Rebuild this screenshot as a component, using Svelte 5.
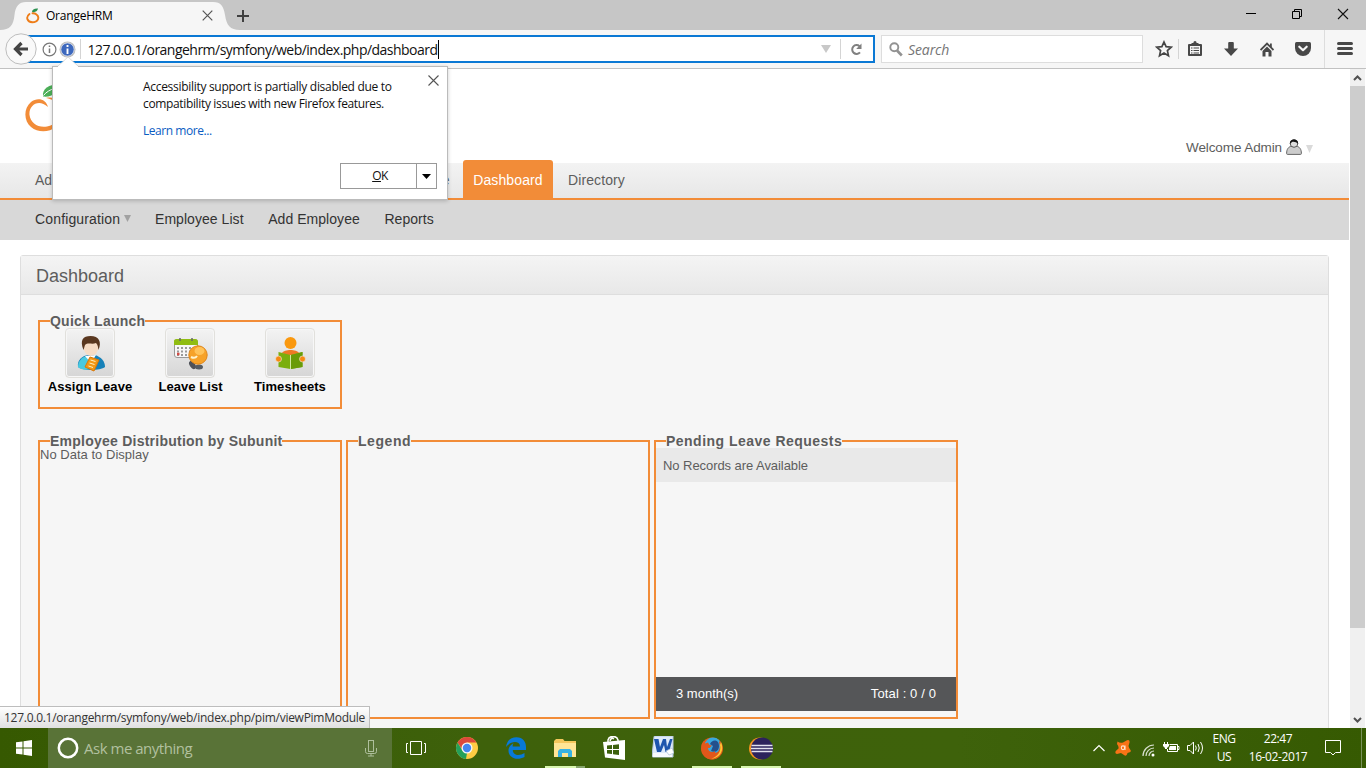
<script>
  const submenu = ['Employee List', 'Add Employee', 'Reports'];
  const launch = [
    { label: 'Assign Leave', icon: 'person' },
    { label: 'Leave List', icon: 'calendar' },
    { label: 'Timesheets', icon: 'book' }
  ];
</script>

<div class="screen">
  <header class="titlebar">
    <svg class="tabshape" width="246" height="30" viewBox="0 0 246 30">
      <path d="M0 30C10 30 13.500 25 14.500 15C15.500 6 19 2 26 2H213C221 2 223.500 6 225 15C226.500 25 230 30 240 30Z" fill="#f6f6f6" />
    </svg>
    <div class="tab">
      <svg width="14" height="16" viewBox="0 0 14 16">
        <path d="M3.500 6C-.5 9 1 14 6.300 14.200C12.500 14.200 13.800 9 10.500 6.500C9.500 5.700 8 5.200 6.500 5.300" fill="none" stroke="#ee7d18" stroke-width="1.900" stroke-linecap="round" />
        <path d="M6 4C6 1.500 8.500.3 12 .6C11.500 3.600 9 4.500 6 4Z" fill="#2b9150" />
      </svg>
      <span>OrangeHRM</span>
      <svg class="x" width="11" height="11" viewBox="0 0 11 11"><path d="M.7.700L10.300 10.300M10.300.700L.7 10.300" stroke="#555" stroke-width="1.200" /></svg>
    </div>
    <svg class="plus" width="12" height="12" viewBox="0 0 12 12"><path d="M6 0V12M0 6H12" stroke="#404040" stroke-width="2" /></svg>
    <div class="winbtns">
      <svg width="46" height="28" viewBox="0 0 46 28"><path d="M18 13.500H28" stroke="#000" /></svg>
      <svg width="46" height="28" viewBox="0 0 46 28"><path d="M18.500 11.500H25.500V18.500H18.500ZM20.500 11V9.500H27.500V16.500H26" fill="none" stroke="#000" /></svg>
      <svg width="46" height="28" viewBox="0 0 46 28"><path d="M18 9L28 19M28 9L18 19" stroke="#111" stroke-width="1.100" /></svg>
    </div>
  </header>

  <nav class="toolbar">
    <svg class="back" width="32" height="32" viewBox="0 0 32 32">
      <circle cx="16" cy="16" r="15.200" fill="#f9f9f9" stroke="#bdbdbd" />
      <path d="M16.500 10L10.500 16L16.500 22M11.500 16H23" fill="none" stroke="#444" stroke-width="3.200" />
    </svg>
    <div class="urlbar">
      <svg width="15" height="15" viewBox="0 0 15 15"><circle cx="7.500" cy="7.500" r="6.400" fill="none" stroke="#777" stroke-width="1.200" /><path d="M7.500 6.500V11M7.500 3.500V5" stroke="#777" stroke-width="1.500" /></svg>
      <svg width="17" height="17" viewBox="0 0 17 17"><circle cx="8.500" cy="8.500" r="8" fill="#bdbdbd" /><circle cx="8.500" cy="8.500" r="6.600" fill="#3d68bd" stroke="#e8ecf5" stroke-width=".7" /><path d="M8.500 7.500V13M8.500 4V6" stroke="#fff" stroke-width="1.900" /></svg>
      <i class="sep"></i>
      <span class="url">127.0.0.1/orangehrm/symfony/web/index.php/dashboard</span><i class="caret"></i>
      <svg class="drop" width="10" height="8" viewBox="0 0 10 8"><path d="M0 0H10L5 8Z" fill="#c8c8c8" /></svg>
      <i class="sep tall"></i>
      <svg class="reload" width="13" height="13" viewBox="0 0 13 13"><path d="M9.500 3.200A4.400 4.400 0 1 0 10 9.300" fill="none" stroke="#808080" stroke-width="2" /><path d="M11.500.5V6H6.200Z" fill="#808080" /></svg>
    </div>
    <div class="search">
      <svg width="14" height="15" viewBox="0 0 14 15"><circle cx="5.300" cy="5.300" r="4" fill="none" stroke="#929292" stroke-width="1.900" /><path d="M8 8.500L12.800 13.500" stroke="#929292" stroke-width="2.600" /></svg>
      <span>Search</span>
    </div>
    <div class="tools">
      <svg width="18" height="18" viewBox="0 0 18 18"><path d="M9 2L11.100 6.700L16.200 7.200L12.400 10.600L13.500 15.700L9 13L4.500 15.700L5.600 10.600L1.800 7.200L6.900 6.700Z" fill="none" stroke="#454545" stroke-width="1.700" /></svg>
      <i class="sep"></i>
      <svg class="clip" width="16" height="16" viewBox="0 0 16 16"><path d="M2 4H14V14H2Z" fill="none" stroke="#484848" stroke-width="2" stroke-linejoin="round" /><path d="M4.500 3.500V2H6.300Q6.500 0 8 0Q9.500 0 9.700 2H11.500V4H4.500Z" fill="#484848" /><path d="M4 7H5.500M6.500 7H12M4 9.500H5.500M6.500 9.500H12M4 12H5.500M6.500 12H12" stroke="#484848" stroke-width="1.200" /></svg>
      <svg width="14" height="14" viewBox="0 0 14 14"><path d="M4.200 1Q4.200 0 5.200 0H8.800Q9.800 0 9.800 1V6.500H14L7 14L0 6.500H4.200Z" fill="#484848" /></svg>
      <svg width="14" height="15" viewBox="0 0 14 15"><path d="M.5 8L7 1.500L13.500 8" fill="none" stroke="#484848" stroke-width="1.900" /><path d="M2.500 9L7 4.500L11.500 9V14.500H8.500V10H5.500V14.500H2.500Z" fill="#484848" /><path d="M10 1.500H11.800V5H10Z" fill="#484848" /></svg>
      <svg width="16" height="14" viewBox="0 0 16 14"><path d="M1.500 0H14.500Q16 0 16 1.500V6A8 8 0 0 1 0 6V1.500Q0 0 1.500 0Z" fill="#484848" /><path d="M4.300 4.700L8 8.200L11.700 4.700" fill="none" stroke="#f6f6f6" stroke-width="2.200" stroke-linecap="round" stroke-linejoin="round" /></svg>
      <i class="divider"></i>
      <svg class="burger" width="16" height="13" viewBox="0 0 16 13"><path d="M1.500 1.500H14.500M1.500 6.500H14.500M1.500 11.500H14.500" stroke="#484848" stroke-width="3" stroke-linecap="round" /></svg>
    </div>
  </nav>

  <div class="viewport">
    <main class="page">
      <div class="brand">
        <svg class="logo" width="52" height="52" viewBox="0 0 52 52">
          <path d="M24 24C22 15.500 13 14 7 19C-1 26 0 38 7 44C14 50 25 49.500 32 44C41 37 42 25 35 18C31 14.500 26 14 22 15C28 16 34 19 36 25C38 33 33 42 23 43.500C14 45 6.500 40 5.500 32C4.500 23 14 15 24 24Z" fill="#f28c38" />
          <path d="M19 13.500C18 6 24 1 37 1C34 10 28 14.500 19 13.500Z" fill="#4caf58" /><path d="M19.500 12.500C22 9 26 7 31 5" fill="none" stroke="#fff" />
        </svg>
        <div class="welcome"><span>Welcome Admin</span>
          <svg width="16" height="17" viewBox="0 0 16 17"><path d="M.6 15.500C.6 11 2.500 8.800 5.500 8.200H10.500C13.500 8.800 15.400 11 15.400 15.500Q15.400 16.400 14.400 16.400H1.600Q.6 16.400.6 15.500Z" fill="#ccc" stroke="#666" /><circle cx="8" cy="5.500" r="3.800" fill="#ddd" stroke="#555" /><path d="M4 6C3 0 13 0 12 6C10.500 4 8 3.500 6 4Z" fill="#151515" /></svg>
          <svg class="tri" width="7" height="8" viewBox="0 0 7 8"><path d="M0 0H7L3.500 8Z" fill="#dadada" /></svg>
        </div>
      </div>
      <div class="menu"><span class="admin">Admin</span><span class="time">Time</span><b>Dashboard</b><span class="directory">Directory</span></div>
      <div class="submenu">
        <i class="notch"></i>
        <span class="config">Configuration<svg width="7" height="7" viewBox="0 0 7 7"><path d="M0 0H7L3.500 7Z" fill="#a1a1a1" /></svg></span>
        {#each submenu as item}<span>{item}</span>{/each}
      </div>
      <section class="box">
        <h1>Dashboard</h1>
        <div class="content">
          <section class="panel quick">
            <h2 class="quicktitle">Quick Launch</h2>
            <div class="launches">
              {#each launch as item}
                <div class="launch">
                  <div class="tile">
                    <svg width="46" height="46" viewBox="0 0 46 46">
                      {#if item.icon === 'person'}
                        <path d="M11 37C10 30 15 26 21 25H28C34 27 38 31 38 37C33 41 16 41 11 37Z" fill="#1681b8" />
                        <path d="M11 37C11 31 15 27 20 26L24 39C19 40 14 40 11 37Z" fill="#49c9df" />
                        <path d="M18 26L24 33L29 25Z" fill="#fff" />
                        <ellipse cx="24" cy="17" rx="7.500" ry="9" fill="#f6dcc5" />
                        <path d="M16.500 20C12.500 10 16 6 23.500 6C32 6 35 12 31.500 20C31 17 31 15 29 13C25 15 21 12 18 15Z" fill="#5a3820" />
                        <path d="M23 27L32 30L27 41L18 37Z" fill="#f39815" stroke="#d87707" /><path d="M23.500 30L28.500 31.500M22.500 33L27.500 34.500M21.500 36L26 37.500" stroke="#fff1c0" />
                      {:else if item.icon === 'calendar'}
                        <rect x="7.500" y="9.500" width="23" height="18" rx="2.500" fill="#f7f7f7" stroke="#999" />
                        <path d="M7 15V11Q7 9 10 9H28Q31 9 31 12V15Z" fill="#90bd12" /><path d="M13 8V11M25 8V11" stroke="#666" stroke-width="1.500" />
                        <path d="M10 18H28M10 21.500H28M10 25H28" stroke="#999" stroke-width="2" stroke-dasharray="2 2" /><path d="M10 24H12.500" stroke="#d34b45" stroke-width="2.500" />
                        <ellipse cx="25.500" cy="35" rx="4.500" ry="2.700" transform="rotate(55 25.500 35)" fill="#4e5158" /><ellipse cx="32" cy="37" rx="4" ry="2.500" fill="#555b62" />
                        <circle cx="31" cy="25" r="9.200" fill="#f6a229" stroke="#df8518" /><ellipse cx="32.500" cy="21" rx="5" ry="4" fill="#ffc35a" /><path d="M24 27Q28 29 30 26" fill="none" stroke="#fff3ce" stroke-width="2" />
                      {:else}
                        <circle cx="23.500" cy="13" r="6" fill="#fa980e" /><path d="M15 23C17 19 30 19 32 23L24 27Z" fill="#ee7924" />
                        <path d="M11.500 22L23.500 25L35.500 22V37L23.500 39L11.500 37Z" fill="#7bae0d" /><path d="M24 25L35.500 22V37L24 39Z" fill="#699b08" /><path d="M23.500 25V39" stroke="#d1e9a2" />
                        <circle cx="11.500" cy="29" r="3" fill="#f78913" stroke="#eee" stroke-width=".6" /><circle cx="35.500" cy="29" r="3" fill="#f78913" stroke="#eee" stroke-width=".6" />
                      {/if}
                    </svg>
                  </div>
                  <strong>{item.label}</strong>
                </div>
              {/each}
            </div>
          </section>
          <div class="panels">
            <section class="panel"><h2 class="dist">Employee Distribution by Subunit</h2><p>No Data to Display</p></section>
            <section class="panel"><h2 class="legend">Legend</h2></section>
            <section class="panel pending"><h2>Pending Leave Requests</h2>
              <div class="empty">No Records are Available</div>
              <footer><span>3 month(s)</span><span class="total">Total : 0 / 0</span></footer>
            </section>
          </div>
        </div>
      </section>
    </main>
    <aside class="scrollbar">
      <svg width="15" height="17" viewBox="0 0 15 17"><path d="M4 11L7.500 7.500L11 11" fill="none" stroke="#505050" stroke-width="2" /></svg>
      <i></i>
      <svg class="end" width="15" height="17" viewBox="0 0 15 17"><path d="M4 7L7.500 10.500L11 7" fill="none" stroke="#505050" stroke-width="2" /></svg>
    </aside>
  </div>

  <footer class="taskbar">
    <div class="start"><svg width="16" height="16" viewBox="0 0 16 16"><path d="M0 2.300L6.500 1.400V7.500H0ZM7.500 1.200L16 0V7.500H7.500ZM0 8.500H6.500V14.600L0 13.700ZM7.500 8.500H16V16L7.500 14.800Z" fill="#fff" /></svg></div>
    <div class="cortana">
      <svg width="22" height="22" viewBox="0 0 22 22"><circle cx="11" cy="11" r="9.200" fill="none" stroke="#fff" stroke-width="2.500" /></svg>
      <span>Ask me anything</span>
      <svg class="mic" width="12" height="17" viewBox="0 0 12 17"><rect x="3.500" y=".5" width="5" height="11" fill="none" stroke="#aebf9c" /><path d="M.5 8V11.500Q.5 13.500 2.500 13.500H9.500Q11.500 13.500 11.500 11.500V8M6 13.500V16M3 16H9" fill="none" stroke="#aebf9c" /></svg>
    </div>
    <div class="apps">
      <div class="task"><svg width="22" height="16" viewBox="0 0 22 16"><path d="M5.500 1.500H16.500V14.500H5.500ZM3 3.500H1.500V12.500H3M19 3.500H20.500V12.500H19" fill="none" stroke="#fff" /></svg></div>
      <div><svg width="22" height="22" viewBox="0 0 22 22"><circle cx="11" cy="11" r="11" fill="#fc4" /><path d="M1.500 5.500A11 11 0 0 1 20.500 5.500H11L7 13.500Z" fill="#dc493b" /><path d="M1.500 5.500L6.800 14L11 16L10 22A11 11 0 0 1 1.500 5.500Z" fill="#25a05a" /><circle cx="11" cy="11" r="5.500" fill="#f6f6f6" /><circle cx="11" cy="11" r="4.200" fill="#4486ef" /></svg></div>
      <div><svg width="20" height="22" viewBox="0 0 20 22"><path d="M0 10C1 3 5 .3 10.500.3C17 .3 20 5 20 10V13H6.800C7 19 14 19 18.500 16V20C11 24 2.500 21 2.500 13.500C2.500 10 5 7.500 7.500 6.300C6.500 7.500 6.700 8.500 6.700 9.400H14C14 3.800 5 3.300 0 10Z" fill="#0879d7" /></svg></div>
      <div class="open more"><svg width="22" height="18" viewBox="0 0 22 18"><path d="M0 2L2 0H9L10.500 2H22V18H0Z" fill="#f4c75c" /><path d="M0 4H22V18H0Z" fill="#ffe596" /><path d="M4 18V12L6 10H16L18 12V18H14V14H8V18Z" fill="#38b2e4" /></svg></div>
      <div><svg width="22" height="24" viewBox="0 0 22 24"><path d="M0 6L22 4V24L2 21.500Z" fill="#fff" /><path d="M5 6V4Q6 0 10 .8Q14 0 15 4V5M7 5Q8 1 11 3" fill="none" stroke="#fff" stroke-width="1.500" /><path d="M4 9.500L9 9V13H4ZM10 8.900L16 8.200V13H10ZM4 14H9V18L4 17.500ZM10 14H16V19L10 18.200Z" fill="#3c600c" /></svg></div>
      <div class="word"><svg width="22" height="22" viewBox="0 0 22 22"><path d="M2 1Q2 0 3 0H21V21H1Q0 21 0 20Z" fill="#dfeafa" stroke="#b6c9df" /><path d="M1 17H20V21H1Z" fill="#f8fafe" /><path d="M2 3H6.500L8 11L11 3H14L15 11L18 3H20.500L17 16H13.500L12 9L9 16H5Z" fill="#1e55ae" /><path d="M14 15L20 12L22 17L17 19Z" fill="#fff" stroke="#a9bed7" stroke-width=".7" /></svg></div>
      <div class="open"><svg width="22" height="23" viewBox="0 0 22 23"><circle cx="11" cy="11.500" r="11" fill="#e25c19" /><circle cx="12" cy="9" r="8.500" fill="#38a9df" /><path d="M9 7C11 2 18 2 18 9C18 14 14 16 10 14L12 9Z" fill="#24508c" /><path d="M19 4C25 13 19 22.500 11 22.500C4 22.500-1 16 .8 7L3 3.500L4 6.500L7 5.500L8.500 8L11 8.500L8.500 11H7C7 15 12 16 14 14C13 17 17 16 18 13C20 9 18 6 18 5Z" fill="#e2571a" /><path d="M20 5C24 14 18 21.500 10 21.500C17 20 20.500 14 19 8Z" fill="#ffc633" /></svg></div>
      <div class="open"><svg width="24" height="23" viewBox="0 0 24 23"><circle cx="11" cy="11.500" r="11" fill="#f6941f" /><circle cx="13" cy="11.500" r="11" fill="#2c225c" /><path d="M2.500 8.500H23.500M2 11.500H24M2.500 14.500H23.500" stroke="#e3e2ef" stroke-width="1.700" /></svg></div>
    </div>
    <div class="tray">
      <svg width="12" height="8" viewBox="0 0 12 8"><path d="M.5 7L6 1.500L11.500 7" fill="none" stroke="#fff" stroke-width="1.200" /></svg>
      <svg class="avast" width="17" height="16" viewBox="0 0 17 16"><path d="M2.500 1.500Q5 3.500 8 2.500L12 .3Q15-.7 14.500 2.500L13.500 6Q14 8.500 15.500 10Q16.500 12 14 12.500Q12 12.500 12 14.500Q11 16.500 9 15L6 13L2 14Q-.5 13.500.8 11L3.500 8.500Q4 6.500 2 4Z" fill="#f87316" /><ellipse cx="8" cy="7.800" rx="1.700" ry="1.900" fill="none" stroke="#ffe4ce" stroke-width="1.100" /><path d="M10 5.500V10" stroke="#ffe4ce" stroke-width="1.100" /></svg>
      <svg class="wifi" width="13" height="13" viewBox="0 0 13 13"><path d="M1 12A11 11 0 0 1 12 1M4 12A8 8 0 0 1 12 4M7 12A5 5 0 0 1 12 7" fill="none" stroke="#d7dfce" stroke-width="1.200" /><circle cx="11" cy="11" r="1.500" fill="#fff" /></svg>
      <svg class="battery" width="17" height="12" viewBox="0 0 17 12"><path d="M6.500 2.500H14.500V9.500H4.500V7M15 4.500H16V7.500H15" fill="none" stroke="#fff" /><path d="M7 4H13V8H6V6Z" fill="#fff" /><path d="M1 0H2V2H4V0H5V2H6V4L4 6V7H2V6L0 4V2H1Z" fill="#fff" /></svg>
      <svg class="speaker" width="17" height="14" viewBox="0 0 17 14"><path d="M.5 4.500H3L6.500 1V13L3 9.500H.5ZM8.500 4.500Q10 7 8.500 9.500M11 3Q13.500 7 11 11M13.500 1Q17.500 7 13.500 13" fill="none" stroke="#fff" /></svg>
      <div class="lang"><span>ENG</span><span>US</span></div>
      <div class="clock"><span>22:47</span><span class="date">16-02-2017</span></div>
      <svg class="note" width="16" height="16" viewBox="0 0 16 16"><path d="M.5.500H15.500V12.500H10.500L8 15L5.500 12.500H.5Z" fill="none" stroke="#fff" /></svg>
      <i class="peek"></i>
    </div>
  </footer>

  <div class="status">127.0.0.1/orangehrm/symfony/web/index.php/pim/viewPimModule</div>
  <aside class="popup">
    <svg class="arrow" width="20" height="10" viewBox="0 0 20 10"><path d="M0 9L10 0L20 9V10H0Z" fill="#fff" /><path d="M0 9L10 0L20 9" fill="none" stroke="#ccc" stroke-width=".7" /></svg>
    <svg class="dismiss" width="11" height="11" viewBox="0 0 11 11"><path d="M.5.500L10.500 10.500M10.500.500L.5 10.500" stroke="#555" stroke-width="1.100" /></svg>
    <div class="message"><span class="line1">Accessibility support is partially disabled due to</span><span class="line2">compatibility issues with new Firefox features.</span></div>
    <a href="#learn">Learn more...</a>
    <div class="ok"><span><u>O</u>K</span><i><svg width="9" height="5" viewBox="0 0 9 5"><path d="M0 0H9L4.500 5Z" /></svg></i></div>
  </aside>
</div>

<style>
  :global(body) { margin: 0; overflow: hidden; }
  .screen, .screen * { box-sizing: border-box; }
  .screen { position: relative; width: 1366px; height: 768px; display: flex; flex-direction: column; overflow: hidden; background: #fff; font-family: "Open Sans", "Noto Sans", sans-serif; }
  svg { display: block; flex: none; }
  i { font-style: normal; }
  .titlebar { height: 30px; flex: none; display: flex; background: #c6c6c6; position: relative; }
  .tabshape { position: absolute; left: 0; top: 0; }
  .tab { position: relative; width: 237px; height: 30px; padding: 1px 0 0 26px; display: flex; align-items: center; font-size: 12px; color: #000; }
  .tab span { margin-left: 6px; width: 156px; letter-spacing: -.22px; }
  .plus { margin-top: 10px; position: relative; }
  .winbtns { display: flex; margin-left: auto; }
  .toolbar { height: 39px; flex: none; display: flex; background: #f6f6f6; border-bottom: 1px solid #c1c1c1; padding-top: 5px; }
  .back { margin: -2px -16px 0 5px; position: relative; z-index: 1; }
  .urlbar { width: 854px; height: 28px; border: 2px solid #0a78d4; background: #fff; display: flex; align-items: center; padding-left: 19px; }
  .urlbar svg + svg { margin-left: 2px; }
  .sep { display: block; width: 1px; height: 20px; background: #d4d4d4; margin-left: 4px; }
  .url { margin-left: 6.500px; font-size: 14px; color: #111; letter-spacing: -.52px; white-space: nowrap; }
  .caret { width: 1px; height: 19px; background: #000; }
  .drop { margin-left: auto; }
  .sep.tall { margin-left: 9px; }
  .reload { margin: 0 10px 0 9px; }
  .search { width: 262px; height: 28px; margin-left: 6px; border: 1px solid #ddd; background: #fff; display: flex; align-items: center; padding-left: 7px; color: #757575; font-size: 14px; font-style: italic; }
  .search span { margin-left: 5px; letter-spacing: -.1px; }
  .tools { display: flex; align-items: center; height: 28px; margin-left: 12px; }
  .tools .sep { margin-left: 5px; }
  .clip { margin: 0 21px 0 8px; }
  .tools .clip + svg { margin-right: 22px; }
  .tools .clip + svg + svg { margin-right: 21px; }
  .divider { height: 38px; width: 1px; background: #ddd; margin-left: 13px; }
  .burger { margin-left: 12px; margin-top: -1px; }
  .viewport { flex: 1; min-height: 0; display: flex; }
  .page { width: 1350px; flex: none; overflow: hidden; font-family: "Liberation Sans", Arial, sans-serif; color: #5d5d5d; font-size: 14px; }
  .brand { height: 94px; display: flex; justify-content: space-between; padding: 14px 37px 0 24px; }
  .welcome { display: flex; align-items: center; height: 20px; margin-top: 54px; }
  .welcome span { margin-right: 4px; font-size: 13.500px; letter-spacing: -.1px; }
  .welcome svg { margin-top: -1px; }
  .welcome .tri { margin: 4px 0 0 4px; }
  .menu { height: 37px; width: 1349px; display: flex; align-items: flex-end; background: linear-gradient(#f3f3f3, #e7e7e7); border-bottom: 2px solid #f28c38; line-height: 35px; }
  .admin { width: 383px; padding-left: 35px; }
  .time { width: 80px; padding-left: 36px; }
  .menu b { width: 90px; height: 38px; line-height: 40px; background: #f28c38; color: #fff; font-weight: 400; text-align: center; border-radius: 3px 3px 0 0; letter-spacing: .12px; }
  .directory { margin-left: 15px; letter-spacing: .1px; }
  .submenu { height: 40px; width: 1349px; background: #d8d8d8; display: flex; padding-left: 35px; gap: 24.6px; line-height: 38px; color: #333; position: relative; letter-spacing: .05px; }
  .notch { position: absolute; left: 89px; top: -2px; width: 43px; height: 2px; background: #d8d8d8; }
  .config { display: flex; width: 96px; justify-content: space-between; letter-spacing: .15px; margin-right: -.6px; }
  .config svg { margin-top: 15px; }
  .box { margin: 15px 0 0 20px; width: 1309px; height: 480px; border: 1px solid #dedede; border-radius: 3px 3px 0 0; background: #f6f6f6; }
  h1 { margin: 0; height: 39px; padding-left: 15px; font-size: 18px; line-height: 41px; font-weight: 400; color: #5d5d5d; background: linear-gradient(#f4f4f4, #e8e8e8); border-bottom: 1px solid #dedede; }
  .content { padding: 25px 0 0 17px; }
  .panel { width: 304px; height: 279px; border: 2px solid #f28c38; }
  .quick { height: 89px; }
  h2 { width: max-content; margin: -9px 0 0 10px; height: 16px; line-height: 16px; background: #f6f6f6; font-size: 14px; font-weight: 700; letter-spacing: .48px; color: #5d5d5d; }
  .quicktitle { letter-spacing: .22px; }
  .dist { letter-spacing: .24px; }
  .legend { letter-spacing: .55px; }
  .launches { display: flex; }
  .launch { width: 100px; display: flex; flex-direction: column; align-items: center; }
  .tile { width: 50px; height: 50px; border: 1px solid #e1e0dc; border-radius: 4px; padding: 1px; background: linear-gradient(#f3f3f3, #d6d6d6); box-shadow: inset 0 0 0 1px #f7f7f7; margin-top: -1px; }
  strong { margin-top: 1px; font-size: 13px; line-height: 15px; color: #000; letter-spacing: .05px; white-space: nowrap; }
  .launch:nth-child(2) strong { margin-left: 1px; }
  .panels { display: flex; gap: 4px; margin-top: 31px; }
  p { margin: -2px 0 0 0; font-size: 13px; line-height: 16px; letter-spacing: .02px; }
  .pending { display: flex; flex-direction: column; font-size: 13px; }
  .empty { height: 34px; margin-top: -1px; line-height: 36px; background: #e9e9e9; padding-left: 7px; letter-spacing: -.06px; }
  .pending h2 { position: relative; background: linear-gradient(#f6f6f6 0 10px, transparent 10px); }
  .pending footer { margin-top: auto; margin-bottom: 6px; height: 34px; line-height: 34px; display: flex; justify-content: space-between; padding: 0 20px; background: #555658; color: #fff; letter-spacing: 0; }
  .total { letter-spacing: .12px; }
  .scrollbar { width: 15px; background: #f0f0f0; display: flex; flex-direction: column; }
  .scrollbar i { height: 542px; width: 15px; background: #cdcdcd; }
  .end { margin-top: auto; }
  .taskbar { height: 40px; flex: none; display: flex; background: linear-gradient(90deg, #365901, #3e610b 35%, #3e620b 70%, #365a02); color: #fff; }
  .start { width: 48px; display: flex; align-items: center; justify-content: center; }
  .cortana { width: 344px; background: #597337; display: flex; align-items: center; padding: 0 15px 0 9px; font-size: 15px; color: #b1c09f; }
  .cortana span { margin-left: 5px; letter-spacing: -.48px; }
  .mic { margin-left: auto; }
  .apps { display: flex; width: 394px; padding-left: 1px; }
  .apps div { width: 49px; height: 40px; display: flex; justify-content: center; align-items: center; margin-right: .1px; }
  .apps .task { padding-right: 3px; }
  .apps .word { padding-bottom: 2px; }
  .apps .open { position: relative; }
  .open::after { content: ""; position: absolute; left: 4.500px; bottom: 0; width: 40px; height: 2px; background: #d8f5ae; }
  .more::after { background: linear-gradient(90deg, #d8f5ae 31px, #85a46a 31px); }
  .tray { margin-left: auto; display: flex; align-items: center; }
  .avast { margin-left: 10px; } .wifi { margin: 4px 0 0 10px; } .battery { margin-left: 8px; } .speaker { margin-left: 7px; }
  .lang, .clock { display: flex; flex-direction: column; align-items: center; font-size: 12px; line-height: 18px; letter-spacing: -.4px; margin-top: -1px; }
  .lang { width: 26px; margin-left: 7px; } .clock { width: 60px; margin-left: 11px; }
  .note { margin: 0 20px 0 17px; }
  .peek { width: 5px; height: 40px; border-left: 1px solid #79915a; }
  .status { position: absolute; left: 0; top: 706px; width: 370px; height: 22px; padding-left: 4px; border-top: 1px solid #bdbdbd; border-right: 1px solid #bdbdbd; background: linear-gradient(#fff, #e0e0e0); font-size: 12px; line-height: 22px; color: #333; letter-spacing: -.27px; white-space: nowrap; }
  .popup { position: absolute; left: 52px; top: 66px; width: 396px; height: 134px; border: 1px solid #bbb; background: #fff; box-shadow: 0 1px 4px #0003; padding: 11px 10px 0 90px; font-size: 12px; color: #111; }
  .arrow { position: absolute; left: 5px; top: -10px; }
  .dismiss { position: absolute; left: 375px; top: 8px; }
  .message { display: flex; flex-direction: column; line-height: 17px; white-space: nowrap; letter-spacing: -.3px; }
  .line2 { letter-spacing: -.35px; }
  a { display: block; margin-top: 10px; line-height: 17px; color: #0a5cc2; text-decoration: none; letter-spacing: -.45px; }
  .ok { width: 97px; height: 26px; margin: 24px 0 0 auto; border: 1px solid #999; display: flex; line-height: 24px; }
  .ok span { flex: 1; padding-left: 3px; text-align: center; letter-spacing: -.5px; }
  .ok i { width: 20px; border-left: 1px solid #999; display: flex; align-items: center; justify-content: center; }
</style>
